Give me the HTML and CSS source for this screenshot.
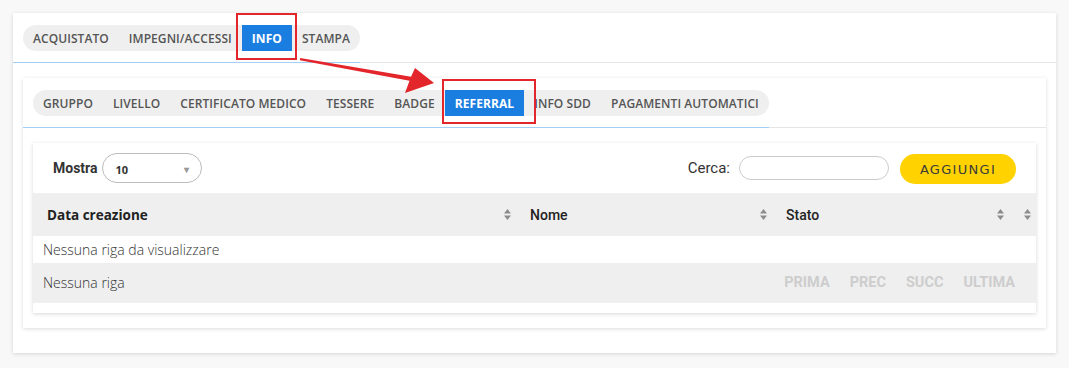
FILE: index.html
```html
<!DOCTYPE html>
<html lang="it">
<head>
    <meta charset="UTF-8">
    <title>Referral</title>
    <link rel="stylesheet" href="styles.css">
</head>
<body>
    <div class="page">
        <div class="card outer">
            <div class="tabs-head">
                <div class="tabs-wrap">
                    <nav class="tabs">
                        <a>ACQUISTATO</a>
                        <a>IMPEGNI/ACCESSI</a>
                        <a class="active">INFO</a>
                        <a>STAMPA</a>
                    </nav>
                </div>
            </div>
            <div class="card-body">
                <div class="card inner">
                    <div class="tabs-head">
                        <div class="tabs-wrap">
                            <nav class="tabs">
                                <a>GRUPPO</a>
                                <a>LIVELLO</a>
                                <a>CERTIFICATO MEDICO</a>
                                <a>TESSERE</a>
                                <a>BADGE</a>
                                <a class="active">REFERRAL</a>
                                <a>INFO SDD</a>
                                <a>PAGAMENTI AUTOMATICI</a>
                            </nav>
                        </div>
                    </div>
                    <div class="card-body inner-body">
                        <div class="table-box">
                            <div class="toolbar">
                                <div class="length">
                                    <span>Mostra</span>
                                    <div class="select">10 <span class="caret">&#9662;</span></div>
                                </div>
                                <div class="search">
                                    <span>Cerca:</span>
                                    <input type="text">
                                    <button class="btn-add">AGGIUNGI</button>
                                </div>
                            </div>

                            <div class="thead">
                                <div class="th">Data creazione <svg class="sort" viewBox="0 0 7 11"><path d="M0 4.5 3.5 0 7 4.5zM0 6.5 3.5 11 7 6.5z"/></svg></div>
                                <div class="th alt">Nome <svg class="sort" viewBox="0 0 7 11"><path d="M0 4.5 3.5 0 7 4.5zM0 6.5 3.5 11 7 6.5z"/></svg></div>
                                <div class="th alt">Stato <svg class="sort" viewBox="0 0 7 11"><path d="M0 4.5 3.5 0 7 4.5zM0 6.5 3.5 11 7 6.5z"/></svg></div>
                                <div class="th"><span></span><svg class="sort" viewBox="0 0 7 11"><path d="M0 4.5 3.5 0 7 4.5zM0 6.5 3.5 11 7 6.5z"/></svg></div>
                            </div>
                            <div class="empty-row">Nessuna riga da visualizzare</div>
                            <div class="tfoot">
                                <span>Nessuna riga</span>
                                <div class="pager">
                                    <span>PRIMA</span>
                                    <span>PREC</span>
                                    <span>SUCC</span>
                                    <span>ULTIMA</span>
                                </div>
                            </div>
                        </div>
                    </div>
                </div>
            </div>
        </div>

        <!-- annotations -->
        <div class="mark mark-info"></div>
        <div class="mark mark-referral"></div>
        <svg class="arrow" width="1069" height="368" viewBox="0 0 1069 368">
            <polygon points="300.2,58 411,76.8 415,68 434,83 405,93 409.5,80.8 299.8,60.2"/>
        </svg>
    </div>
</body>
</html>
```

FILE: styles.css
```css
:root {
    --tab-bg: #efefef;
    --tab-text: #555;
    --blue: #1a7ee0;
    --blue-line: #a5cff2;
    --line: #e6e6e6;
    --red: #e3262b;
    --yellow: #ffd200;
}

* {
    margin: 0;
    padding: 0;
    box-sizing: border-box;
}

body {
    background: #f8f8f8;
    font-family: 'Open Sans', sans-serif;
    color: #333;
}

.page {
    position: relative;
    width: 1069px;
    height: 368px;
    padding: 13px;
}

/* Cards */
.card {
    background: #fff;
    box-shadow: 0 1px 4px rgba(0, 0, 0, 0.14);
}

.card-body {
    padding: 15px 10px 25px;
}

.inner-body {
    padding: 15px 10px 15px;
}

/* Tabs */
.tabs-head {
    padding-top: 12px;
    border-bottom: 1px solid var(--line);
}

.tabs-wrap {
    width: fit-content;
    padding: 0 0 11px 10px;
    border-bottom: 1px solid var(--blue-line);
    margin-bottom: -1px;
}

.tabs {
    display: flex;
    height: 26px;
    background: var(--tab-bg);
    border-radius: 13px;
}

.tabs a {
    display: flex;
    align-items: center;
    padding: 0 10px;
    font-size: 12px;
    font-weight: 600;
    letter-spacing: 0.07px;
    color: var(--tab-text);
    white-space: nowrap;
}

.tabs a.active {
    background: var(--blue);
    color: #fff;
    font-weight: 700;
}

/* Table box */
.table-box {
    background: #fff;
    box-shadow: 0 1px 4px rgba(0, 0, 0, 0.16);
    padding-bottom: 10px;
}

.toolbar {
    height: 50px;
    padding: 0 20px;
    display: flex;
    align-items: center;
    justify-content: space-between;
}

.length {
    display: flex;
    align-items: center;
    gap: 5px;
    font-family: Roboto, sans-serif;
    font-weight: 700;
    font-size: 14px;
    color: #333;
}

.select {
    width: 100px;
    height: 30px;
    border: 1px solid #bbb;
    border-radius: 15px;
    padding: 2px 12px 0 12px;
    display: flex;
    align-items: center;
    justify-content: space-between;
    font-family: 'Open Sans', sans-serif;
    font-size: 11px;
    font-weight: 700;
    color: #333;
}

.caret {
    font-size: 10px;
    color: #999;
}

.search {
    display: flex;
    align-items: center;
    font-family: Roboto, sans-serif;
    font-size: 15px;
    color: #333;
}

.search input {
    width: 150px;
    height: 24px;
    margin: 0 11px 0 9px;
    border: 1px solid #ccc;
    border-radius: 12px;
    outline: none;
}

.btn-add {
    width: 116px;
    height: 30px;
    border: none;
    border-radius: 15px;
    background: var(--yellow);
    font-family: 'DejaVu Sans', sans-serif;
    font-size: 13px;
    letter-spacing: 1.3px;
    color: #3a3a3a;
    margin-top: 2px;
}

.thead {
    display: grid;
    grid-template-columns: 483px 256px 237px 1fr;
    height: 43px;
    background: var(--tab-bg);
}

.th {
    display: flex;
    align-items: center;
    justify-content: space-between;
    padding: 0 5px 0 14px;
    font-size: 13.5px;
    font-weight: 700;
    color: #222;
}

.th.alt {
    font-family: Roboto, sans-serif;
    font-size: 14px;
    font-weight: 500;
}

.sort {
    width: 7px;
    height: 11px;
    fill: #8c8c8c;
}

.empty-row {
    height: 27px;
    display: flex;
    align-items: center;
    padding-left: 10px;
    font-size: 14px;
    font-weight: 300;
    color: #333;
}

.tfoot {
    height: 40px;
    display: flex;
    align-items: center;
    justify-content: space-between;
    padding: 0 21px 2px 10px;
    background: var(--tab-bg);
    font-size: 14px;
    font-weight: 300;
    color: #333;
}

.pager {
    display: flex;
    gap: 20px;
    font-family: Roboto, sans-serif;
    font-size: 14.5px;
    font-weight: 700;
    color: #cdcdcd;
}

/* Annotations */
.mark {
    position: absolute;
    border: 2px solid var(--red);
}

.mark-info {
    left: 236px;
    top: 13px;
    width: 61px;
    height: 47px;
}

.mark-referral {
    left: 442px;
    top: 79px;
    width: 94px;
    height: 45px;
}

.arrow {
    position: absolute;
    left: 0;
    top: 0;
    fill: var(--red);
    pointer-events: none;
}
```
